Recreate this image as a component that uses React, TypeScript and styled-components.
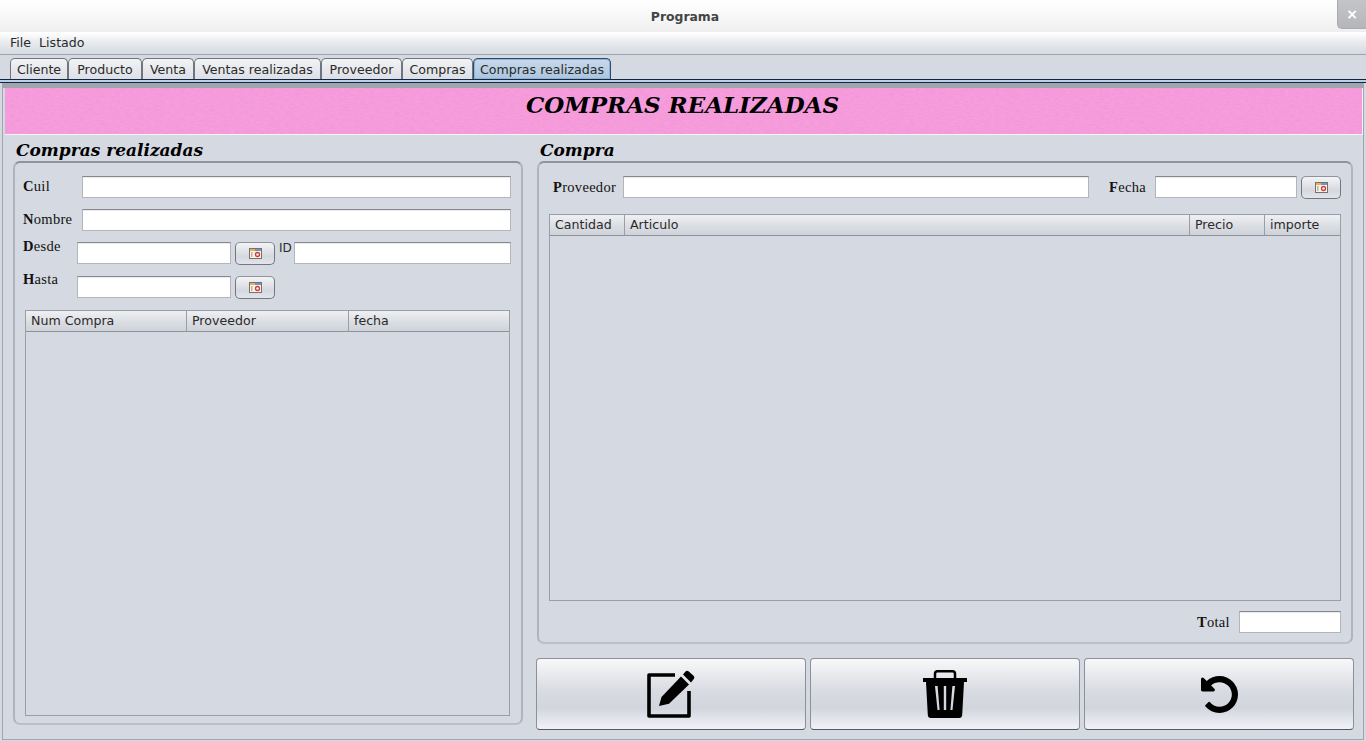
import styled, { createGlobalStyle } from "styled-components";

const GlobalStyle = createGlobalStyle`
  html, body {
    margin: 0;
    padding: 0;
    overflow: hidden;
    background: #d5d9e1;
  }
  * {
    box-sizing: border-box;
  }
`;

const uiFont = `"DejaVu Sans", "Liberation Sans", sans-serif`;
const labelFont = `"Liberation Serif", "DejaVu Serif", serif`;
const titleFont = `"DejaVu Serif", "Liberation Serif", serif`;

const Window = styled.div`
  width: 1366px;
  height: 741px;
  display: flex;
  flex-direction: column;
  background: #d5d9e1;
  font-family: ${uiFont};
  font-size: 12.6px;
  color: #2a2a2a;
`;

const TitleBar = styled.div`
  position: relative;
  height: 32px;
  flex: none;
  display: flex;
  align-items: center;
  justify-content: center;
  padding-left: 4px;
  background: linear-gradient(#ffffff, #f8f8f8 50%, #eeeeee);
  font-size: 12.4px;
  font-weight: bold;
  color: #444;
`;

const CloseButton = styled.div`
  position: absolute;
  top: 0;
  right: 0;
  width: 29px;
  height: 29px;
  display: flex;
  align-items: center;
  justify-content: center;
  background: linear-gradient(#c3c5c9, #b4b6ba);
  border: 1px solid #a9abaf;
  border-top: none;
  border-right: none;
  border-bottom-left-radius: 5px;
  color: #fff;
  font-size: 14px;
  font-weight: bold;
`;

const MenuBar = styled.div`
  height: 23px;
  flex: none;
  display: flex;
  align-items: center;
  gap: 8px;
  padding: 0 0 1px 10px;
  background: linear-gradient(#ffffff 5%, #e9ebef 45%, #d5d9e1);
  border-bottom: 1px solid #9ea2aa;
`;

const TabStrip = styled.div`
  height: 24px;
  flex: none;
  display: flex;
  align-items: flex-end;
  padding-left: 10px;
`;

const Tab = styled.div<{ $width: number; $active?: boolean }>`
  width: ${(p) => p.$width}px;
  height: 21px;
  display: flex;
  align-items: center;
  justify-content: center;
  padding-top: 1px;
  border: 1px solid ${(p) => (p.$active ? "#2c4a6e" : "#70757d")};
  border-bottom: none;
  border-radius: 5px 5px 0 0;
  background: ${(p) =>
    p.$active
      ? "linear-gradient(#c9d9ea, #aac5df)"
      : "linear-gradient(#f2f3f6, #dcdfe5)"};
  box-shadow: ${(p) => (p.$active ? "inset 0 0 0 1px #8fb3d6" : "none")};
`;

const TabRule = styled.div`
  height: 4px;
  flex: none;
  background: #b9d0e8;
  border-top: 1px solid #14263f;
  border-bottom: 1px solid #14263f;
`;

const Content = styled.div`
  flex: 1;
  min-height: 0;
  display: flex;
  flex-direction: column;
  margin: 0 2px 1px 2px;
  border: 1px solid #a1a5ad;
  border-top: 5px solid #a1a5ad;
`;

const Banner = styled.div`
  position: relative;
  height: 47px;
  flex: none;
  margin: 0 0 0 2px;
  display: flex;
  justify-content: center;
  padding: 2px 2px 0 0;
  border-bottom: 1px solid #f4f4f8;
  border-right: 1px solid #f4f4f8;
  background-color: #f89cdc;
  font-family: ${titleFont};
  font-size: 23px;
  line-height: 30px;
  font-weight: bold;
  font-style: italic;
  color: #000;
`;

const BannerTexture = styled.svg`
  position: absolute;
  inset: 0;
  width: 100%;
  height: 100%;
`;

const BannerText = styled.span`
  position: relative;
`;

const Columns = styled.div`
  flex: 1;
  min-height: 0;
  display: flex;
  padding: 5px 9px 9px 10px;
  gap: 15px;
`;

const LeftColumn = styled.div`
  width: 510px;
  flex: none;
  display: flex;
  flex-direction: column;
  padding-bottom: 5px;
`;

const RightColumn = styled.div`
  flex: 1;
  display: flex;
  flex-direction: column;
  min-width: 0;
  margin-left: -1px;
`;

const GroupTitle = styled.div<{ $indent: number }>`
  height: 21px;
  flex: none;
  padding-left: ${(p) => p.$indent}px;
  font-family: ${titleFont};
  font-size: 17px;
  line-height: 20px;
  font-weight: bold;
  font-style: italic;
  color: #000;
`;

const Group = styled.div<{ $inset: number }>`
  flex: 1;
  min-height: 0;
  display: flex;
  flex-direction: column;
  border: 2px solid #b0b4bb;
  border-top-color: #8f939b;
  border-bottom-color: #bbbfc6;
  border-radius: 7px;
  margin-right: ${(p) => p.$inset}px;
`;

const LeftForm = styled.div`
  display: grid;
  grid-template-columns: 54px 154px 4px 40px 4px 15px 217px;
  grid-template-rows: 22px 22px 23px 23px;
  row-gap: 11px;
  padding: 13px 0 0 8px;
  height: 147px;
  flex: none;
`;

const Label = styled.label<{ $nudge?: number }>`
  display: block;
  font-family: ${labelFont};
  font-size: 14.5px;
  line-height: 20px;
  letter-spacing: 0.3px;
  color: #111;
  white-space: nowrap;
  transform: translateY(${(p) => p.$nudge ?? 0}px);

  &::first-letter {
    font-weight: bold;
  }
`;

const TextField = styled.div<{ $span?: string; $width?: number; $indent?: number }>`
  grid-column: ${(p) => p.$span ?? "auto"};
  width: ${(p) => (p.$width ? `${p.$width}px` : "auto")};
  margin-left: ${(p) => p.$indent ?? 0}px;
  height: 22px;
  flex: none;
  background: #fff;
  border: 1px solid #b2b5b9;
  border-top-color: #85888e;
  box-shadow: inset 0 1px 0 #ebebeb;
`;

const DateButton = styled.div`
  width: 40px;
  height: 23px;
  flex: none;
  display: flex;
  align-items: center;
  justify-content: center;
  padding-bottom: 1px;
  border: 1px solid #72767d;
  border-top-color: #8f939a;
  border-radius: 5px;
  background: linear-gradient(#f3f4f6, #d5d8df 65%, #e3e5ec);
`;

const SmallLabel = styled.span`
  font-size: 12px;
  line-height: 12px;
`;

const Table = styled.div<{ $margin: string }>`
  flex: 1;
  min-height: 0;
  margin: ${(p) => p.$margin};
  border: 1px solid #9a9ea6;
`;

const HeaderRow = styled.div`
  height: 21px;
  display: flex;
  border-bottom: 1px solid #8e9299;
  background: linear-gradient(#eef0f3, #d9dce2 60%, #cfd2d9);
`;

const HeaderCell = styled.div<{ $width?: number }>`
  width: ${(p) => (p.$width ? `${p.$width}px` : "auto")};
  flex: ${(p) => (p.$width ? "none" : "1")};
  padding-left: 5px;
  line-height: 20px;
  border-right: 1px solid #9a9ea6;

  &:last-child {
    border-right: none;
  }
`;

const TopRow = styled.div`
  height: 51px;
  flex: none;
  display: flex;
  align-items: flex-start;
  padding: 13px 0 0 14px;
`;

const RowLabel = styled(Label)<{ $width: number }>`
  width: ${(p) => p.$width}px;
  flex: none;
  line-height: 22px;
`;

const Spacer = styled.span<{ $width: number }>`
  width: ${(p) => p.$width}px;
  flex: none;
`;

const TotalRow = styled.div`
  height: 41px;
  flex: none;
  display: flex;
  justify-content: flex-end;
  align-items: flex-start;
  padding: 10px 10px 0 0;
`;

const ActionRow = styled.div`
  height: 72px;
  flex: none;
  display: flex;
  gap: 4px;
  margin: 14px 0 0 -1px;
`;

const ActionButton = styled.div`
  flex: 1;
  display: flex;
  align-items: center;
  justify-content: center;
  border: 1px solid #8d9096;
  border-bottom-color: #55585e;
  border-radius: 4px;
  background: linear-gradient(#f8f8fa, #d8dbe1 45%, #d2d5dd 70%, #f2f3f9);
`;

const CalendarIcon = () => (
  <svg width="13" height="11" viewBox="0 0 13 11">
    <rect x="0.5" y="0.5" width="12" height="10" fill="#f3f3f0" stroke="#77716a" />
    <rect x="1" y="1" width="5" height="2" fill="#eeb04e" />
    <rect x="6" y="1" width="6" height="2" fill="#6f95c4" />
    <rect x="2" y="4" width="1.5" height="5" fill="#c9b48c" />
    <circle cx="8.5" cy="6.5" r="2" fill="none" stroke="#d8392f" strokeWidth="1.3" />
  </svg>
);

const EditIcon = () => (
  <svg width="48" height="48" viewBox="0 0 48 48">
    <path d="M28 5 H2 V46 H42 V21" fill="none" stroke="#000" strokeWidth="3.6" strokeLinejoin="round" />
    <path d="M12 36 L14.5 27 L34 6.5 L42 14.5 L22 33.8 Z" fill="#000" />
    <path d="M36 4.5 L38.5 1.5 Q40 0 41.8 1.5 L46.8 6 Q48 7.5 46.8 9 L44 12.5 Z" fill="#000" />
  </svg>
);

const TrashIcon = () => (
  <svg width="44" height="48" viewBox="0 0 44 48">
    <path d="M12 9 V3.8 Q12 1.2 14.6 1.2 H29.4 Q32 1.2 32 3.8 V9" fill="none" stroke="#000" strokeWidth="2.5" />
    <rect x="0" y="8" width="44" height="4" fill="#000" />
    <path
      fillRule="evenodd"
      d="M3 12 H41 L39.2 45 Q39 48 36 48 H8 Q5 48 4.8 45 Z M12 16 L14.6 16 L16.6 40 L14.5 40 Z M20.8 16 L23.2 16 L23.2 40 L20.8 40 Z M29.4 16 L32 16 L29.5 40 L27.4 40 Z"
      fill="#000"
    />
  </svg>
);

const UndoIcon = () => (
  <svg width="37" height="37" viewBox="128 128 1536 1536">
    <path
      d="M1664 896q0 156-61 298t-164 245-245 164-298 61q-172 0-327-72.5t-264-204.5q-7-10-6.5-22.5t8.5-20.5l137-138q10-9 25-9 16 2 23 12 73 95 179 147t225 52q104 0 198.5-40.5t163.5-109.5 109.5-163.5 40.5-198.5-40.5-198.5-109.5-163.5-163.5-109.5-198.5-40.5q-98 0-188 35.5t-160 101.5l137 138q31 30 14 69-17 40-59 40h-448q-26 0-45-19t-19-45v-448q0-42 40-59 39-17 69 14l130 129q107-101 244.5-156.5t284.5-55.5q156 0 298 61t245 164 164 245 61 298z"
      fill="#000"
    />
  </svg>
);

const tabs = [
  { label: "Cliente", width: 58 },
  { label: "Producto", width: 74 },
  { label: "Venta", width: 52 },
  { label: "Ventas realizadas", width: 127 },
  { label: "Proveedor", width: 81 },
  { label: "Compras", width: 71 },
  { label: "Compras realizadas", width: 138, active: true },
];

const App = () => {
  return (
    <>
      <GlobalStyle />
      <Window>
        <TitleBar>
          Programa
          <CloseButton>×</CloseButton>
        </TitleBar>
        <MenuBar>
          <span>File</span>
          <span>Listado</span>
        </MenuBar>
        <TabStrip>
          {tabs.map((tab) => (
            <Tab key={tab.label} $width={tab.width} $active={tab.active}>
              {tab.label}
            </Tab>
          ))}
        </TabStrip>
        <TabRule />
        <Content>
          <Banner>
            <BannerTexture aria-hidden="true">
              <filter id="weave">
                <feTurbulence type="fractalNoise" baseFrequency="0.2 0.8" numOctaves="2" seed="4" />
                <feColorMatrix values="0 0 0 0 0.8  0 0 0 0 0.3  0 0 0 0 0.65  1.1 0 0 0 -0.38" />
              </filter>
              <rect width="100%" height="100%" filter="url(#weave)" />
            </BannerTexture>
            <BannerText>COMPRAS REALIZADAS</BannerText>
          </Banner>
          <Columns>
            <LeftColumn>
              <GroupTitle $indent={3}>Compras realizadas</GroupTitle>
              <Group $inset={0}>
                <LeftForm>
                  <Label>Cuil</Label>
                  <TextField $span="2 / 8" $indent={5} />
                  <Label>Nombre</Label>
                  <TextField $span="2 / 8" $indent={5} />
                  <Label $nudge={-6}>Desde</Label>
                  <TextField />
                  <span />
                  <DateButton>
                    <CalendarIcon />
                  </DateButton>
                  <span />
                  <SmallLabel>ID</SmallLabel>
                  <TextField />
                  <Label $nudge={-7}>Hasta</Label>
                  <TextField />
                  <span />
                  <DateButton>
                    <CalendarIcon />
                  </DateButton>
                </LeftForm>
                <Table $margin="0 11px 7px 10px">
                  <HeaderRow>
                    <HeaderCell $width={161}>Num Compra</HeaderCell>
                    <HeaderCell $width={162}>Proveedor</HeaderCell>
                    <HeaderCell>fecha</HeaderCell>
                  </HeaderRow>
                </Table>
              </Group>
            </LeftColumn>
            <RightColumn>
              <GroupTitle $indent={3}>Compra</GroupTitle>
              <Group $inset={1}>
                <TopRow>
                  <RowLabel $width={70}>Proveedor</RowLabel>
                  <TextField $width={466} />
                  <Spacer $width={20} />
                  <RowLabel $width={46}>Fecha</RowLabel>
                  <TextField $width={142} />
                  <Spacer $width={4} />
                  <DateButton>
                    <CalendarIcon />
                  </DateButton>
                </TopRow>
                <Table $margin="0 10px 0 10px">
                  <HeaderRow>
                    <HeaderCell $width={75}>Cantidad</HeaderCell>
                    <HeaderCell $width={565}>Articulo</HeaderCell>
                    <HeaderCell $width={75}>Precio</HeaderCell>
                    <HeaderCell>importe</HeaderCell>
                  </HeaderRow>
                </Table>
                <TotalRow>
                  <RowLabel $width={42}>Total</RowLabel>
                  <TextField $width={102} />
                </TotalRow>
              </Group>
              <ActionRow>
                <ActionButton>
                  <EditIcon />
                </ActionButton>
                <ActionButton>
                  <TrashIcon />
                </ActionButton>
                <ActionButton>
                  <UndoIcon />
                </ActionButton>
              </ActionRow>
            </RightColumn>
          </Columns>
        </Content>
      </Window>
    </>
  );
};

export default App;
